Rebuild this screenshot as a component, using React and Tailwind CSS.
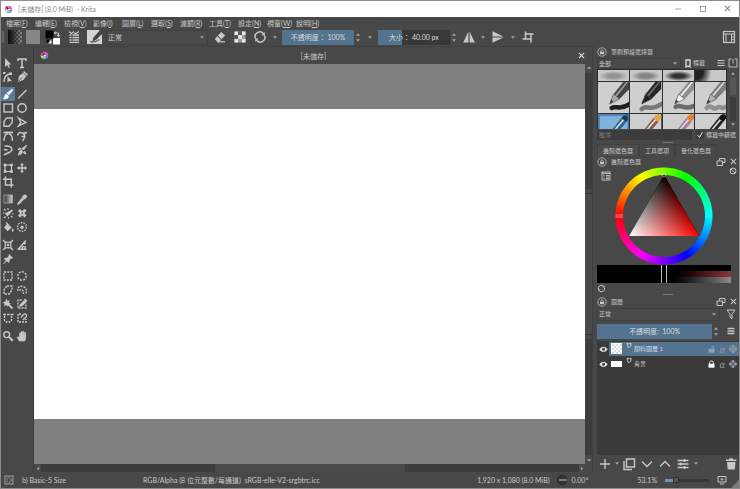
import { useState } from 'react';

const MENUS = [
  ['檔案', 'F'],
  ['編輯', 'E'],
  ['檢視', 'V'],
  ['影像', 'I'],
  ['圖層', 'L'],
  ['選取', 'S'],
  ['濾鏡', 'R'],
  ['工具', 'T'],
  ['設定', 'N'],
  ['視窗', 'W'],
  ['說明', 'H'],
];

const Svg = ({ children, size = 14, className = '' }) => (
  <svg
    viewBox={`0 0 ${size} ${size}`}
    width={size}
    height={size}
    fill="none"
    stroke="currentColor"
    strokeWidth="1.2"
    className={`shrink-0 ${className}`}
    aria-hidden="true"
  >
    {children}
  </svg>
);

const Arrow = ({ up = false }) => (
  <svg viewBox="0 0 4 3" width="4" height="3" className={`shrink-0 ${up ? 'rotate-180' : ''}`} aria-hidden="true">
    <path d="M0 .3h4L2 2.7z" fill="#a4a4a4" />
  </svg>
);

const KritaLogo = () => (
  <svg viewBox="0 0 10 10" width="9" height="9" className="shrink-0" aria-hidden="true">
    <path d="M5 5V.8A4.2 4.2 0 0 1 9.2 5z" fill="#e05ad8" />
    <path d="M5 5h4.2A4.2 4.2 0 0 1 7 8.7z" fill="#6f86f0" />
    <path d="M5 5l2 3.7A4.2 4.2 0 0 1 2.6 8.4z" fill="#35d3e0" />
    <path d="M5 5L2.6 8.4A4.2 4.2 0 0 1 .8 5z" fill="#f4e04a" />
    <path d="M5 5H.8A4.2 4.2 0 0 1 5 .8z" fill="#ee4fb4" />
    <path d="M1.6 1.2l3 2.2 1.8 1.3.2 1.9-1.9-.5-1.2-1.8z" fill="#2b2040" />
    <circle cx="5.4" cy="5.3" r="1.2" fill="#fff" />
  </svg>
);

const TOOLS = [
  [
    ['選取形狀', <path d="M4 2v9l2.2-2 1.5 3 1.3-.6L7.600 8.500H10.400z" fill="currentColor" stroke="none" />],
    ['文字', <path d="M3 5V3h8v2M7 3v8.500M5 11.400h4" strokeWidth="1.500" />],
  ],
  [
    ['編輯形狀', <><path d="M3 12c0-5 2-7.500 6-8" strokeWidth="1.400" /><path d="M2 4h2.500v-2H2zM8 2.500h3v2.500H8z" fill="currentColor" stroke="none" /><path d="M6.500 6v6.500l1.700-1.500 2.800.2z" fill="currentColor" stroke="none" /></>],
    ['書法', <><path d="M3 12l1-6 4-3 3.300 3-3 4z" fill="currentColor" stroke="none" /><path d="M8.500 1.600l4 3.600" strokeWidth="1.600" /><path d="M3.500 11.500L7 7.500" stroke="#484848" strokeWidth=".8" /></>],
  ],
  [
    ['筆刷', <><path d="M11.500 2.500L8 7 7 6.200z" fill="currentColor" strokeWidth="1.800" /><path d="M5.400 7l2.400 2c-.3 3-3 3.600-6 2.900 1.800-.8 1-4.400 3.600-4.900z" fill="currentColor" stroke="none" /></>],
    ['直線', <path d="M3 11.500L11.500 3" strokeWidth="1.400" />],
  ],
  [
    ['矩形', <rect x="3" y="3" width="8.500" height="8" strokeWidth="1.400" />],
    ['橢圓', <circle cx="7" cy="7" r="4.200" strokeWidth="1.400" />],
  ],
  [
    ['多邊形', <path d="M5.500 3h5.700v4.500L8 11.200H3V6.500z" strokeWidth="1.400" />],
    ['折線', <path d="M3.500 3l7.500 4.500-7.500 3.500L6 7.500z" strokeWidth="1.400" />],
  ],
  [
    ['貝茲曲線', <><path d="M3 12c0-4 1.500-7 4-7.500M11.500 12c0-4-1.500-7-4-7.500" strokeWidth="1.300" /><path d="M2.500 3.500h9.500" strokeWidth="1.800" /></>],
    ['手繪路徑', <><path d="M2.500 6.500C4 2.500 5.500 3.500 7 4s3 0 5-.5" strokeWidth="1.500" /><path d="M8 4.500c3 1.500 2 4-.5 7.500M6.500 7.500h3" strokeWidth="1.400" /></>],
  ],
  [
    ['動態筆刷', <path d="M3.500 3c4.500-.5 7.500 1 7.500 3.500S7 9.500 3 12M3 6.500l3.500.5" strokeWidth="1.500" />],
    ['多路筆刷', <path d="M12 2L8.500 7l-1.500-1.500zM9.500 8l1.500 3-2.500-1zM6.200 6L3 6.800l1.500-2zM7.500 8c-.2 2.500-2 4-4.500 4 1.500-1.500 1-4 3-5z" fill="currentColor" strokeWidth=".9" />],
  ],
  [
    ['變形', <><rect x="4" y="4" width="6.500" height="6.500" /><path d="M3 3h2v2H3zM9.500 3h2v2h-2zM3 9.500h2v2H3zM9.500 9.500h2v2h-2z" fill="currentColor" strokeWidth=".7" /></>],
    ['移動', <><path d="M7 3v8M3 7h8" strokeWidth="1.400" /><path d="M7 1.800L9 4.200H5zM7 12.200L5 9.800h4zM1.800 7l2.400-2v4zM12.200 7L9.800 9V5z" fill="currentColor" stroke="none" /></>],
  ],
  [['裁切', <path d="M4.500 1.500v8.500h8M2 4.200h8.300v8.300" strokeWidth="1.500" />]],
  [
    ['漸層', <rect x="3" y="3" width="8.500" height="8" fill="url(#tool-grad)" strokeWidth=".8" stroke="#aaa" />],
    ['顏色取樣', <><path d="M8 5.500L3.500 10.500l-.5 1.500 1.500-.5L9 6.500" /><path d="M7 4.500l3 3 .8-1 1.500-2.200-2.200-2.100L8 3.600z" fill="currentColor" stroke="none" /></>],
  ],
  [
    ['上色遮罩', <><path d="M11.500 4L6.500 9.500l-1.700-1.800z" fill="currentColor" /><path d="M3 3l1.500 1.500M7 2v2M2 7h1.500M3 12l1.500-1.500M10 10l1.500 1.500M7.500 11v1.500M11 8h1.500" /></>],
    ['智慧型修補', <><path d="M4 4l6.500 6.500M10.500 3.800L4 10.500" strokeWidth="3" /><path d="M6.200 7.200h2M7.200 6.200v2" stroke="#484848" strokeWidth=".7" /></>],
  ],
  [
    ['填充', <><path d="M6.500 3.500l4.200 4-4 3.800L3 7.600z" fill="currentColor" stroke="none" /><path d="M5 2.500l2.500 3" /><path d="M11.800 8.500c1.400 2.400.2 3-.2 3s-1.300-.8.200-3z" fill="currentColor" strokeWidth=".5" /></>],
    ['圈選填充', <><circle cx="7" cy="7" r="4.400" strokeDasharray="1.600 1.100" strokeWidth="1.400" /><path d="M5 7.500l2-2.200 2.200 2L7 9.500z" fill="currentColor" stroke="none" /></>],
  ],
  [
    ['輔助工具', <><rect x="4.200" y="4.200" width="5.600" height="5.600" /><path d="M2 2l2.500 2.500M12 2L9.500 4.500M2 12l2.500-2.500M12 12L9.500 9.500M7 5.500v3M5.500 7h3" /></>],
    ['測量', <path d="M2.500 11.200h9M3.500 11L10 3.500v3M9 8.500c-1.500 0-2 1-1.500 2.500M10 8v3" strokeWidth="1.400" />],
  ],
  [['參考圖像', <path d="M8 2.300l3.700 3.500-1 .6-.8-.1-1.600 1.900.1 1.900-.9.500-1.900-1.700L2.500 12l2.300-3.500-1.600-1.900.8-.6 1.900.1L7.900 4z" fill="currentColor" strokeWidth=".5" />]],
  [
    ['矩形選取', <rect x="3" y="3" width="8" height="8" strokeDasharray="2 1.200" strokeWidth="1.400" />],
    ['橢圓選取', <circle cx="7" cy="7" r="4.200" strokeDasharray="2 1.200" strokeWidth="1.400" />],
  ],
  [
    ['多邊形選取', <path d="M6 3h5v4l-3 4H3V6.500z" strokeDasharray="2.200 1" strokeWidth="1.400" />],
    ['手繪選取', <path d="M3 8C2 4 5 2.500 8 3.500s4 3 3 7.500M4.500 7.500c2-2.500 4-.5 4 3.500" strokeDasharray="2 1" strokeWidth="1.400" />],
  ],
  [
    ['連續區域選取', <><path d="M6 6l5.500 5.500" strokeWidth="1.800" /><path d="M5.500 1.500l.9 2.500 2.600-.8L7.700 5.500 10 7l-2.600.4L7 10 5.300 8 3 9.500l.5-2.700L1.500 5.500 4 4.700z" fill="currentColor" stroke="none" /></>],
    ['相似色彩選取', <><path d="M11 7.500V11H3V3h4.500" strokeDasharray="2 1" strokeWidth="1.300" /><path d="M5 9l.5-1.500L9 4l1.500 1.500-3.800 3.200z" fill="currentColor" /><path d="M9.500 2.300l2.300 2.300" strokeWidth="2" /></>],
  ],
  [
    ['貝茲曲線選取', <><path d="M3.500 5v4c0 3 7 3 7 0V5" strokeDasharray="2 1" strokeWidth="1.400" /><path d="M2 3.500h3M6 3.500h2.500M9.500 3.500h3" strokeWidth="1.600" /></>],
    ['磁性選取', <><path d="M6 3H3v8h8V8" strokeDasharray="2 1" strokeWidth="1.400" /><path d="M6 6.500L8.500 3.500c2-1.500 4 .5 2.500 2.500L8 9" strokeWidth="1.300" /></>],
  ],
  [
    ['縮放', <><circle cx="5.700" cy="5.700" r="2.900" strokeWidth="1.400" /><path d="M8 8l3.700 3.700" strokeWidth="2" /></>],
    ['平移', <path d="M4.300 12L2.200 8.300l1-.6L4.500 9V4.200h1V7h.5V2.800h1.200V7h.5V2.600h1.200V7h.5V3.600h1.200v5.600L9.700 12z" fill="currentColor" strokeWidth=".7" />],
  ],
];

// spacing below the rows that close a tool group
const GROUP_GAPS = {
  1: 'mb-[3px]',
  6: 'mb-1',
  8: 'mb-[3px]',
  11: 'mb-1',
  13: 'mb-[3px]',
  17: 'mb-1',
};

const ToolBox = () => (
  <aside className="w-[33px] shrink-0 border-r border-[#3a3a3a] pt-[10px]" aria-label="工具箱">
    <svg width="0" height="0" className="absolute" aria-hidden="true">
      <linearGradient id="tool-grad">
        <stop offset="0" stopColor="#333" />
        <stop offset="1" stopColor="#ccc" />
      </linearGradient>
    </svg>
    {TOOLS.map((row, i) => (
      <div key={row[0][0]} className={`flex ${GROUP_GAPS[i] ?? ''}`}>
        {row.map(([name, shape]) => (
          <button
            key={name}
            type="button"
            title={name}
            aria-label={name}
            className={`size-[14px] ${name === '筆刷' ? 'bg-[#5a7a9c] text-white' : ''}`}
          >
            <Svg>{shape}</Svg>
          </button>
        ))}
      </div>
    ))}
  </aside>
);

const ValueSlider = ({ label, suffix, value, max, className = '' }) => {
  const [current, setCurrent] = useState(value);
  return (
    <div className={`flex ${className}`}>
      <label className="relative flex flex-1 items-center justify-center overflow-hidden bg-[#383838] text-[#dcdcdc]">
        <span className="absolute inset-y-0 left-0 bg-[#53738f]" style={{ width: `${(current / max) * 100}%` }} />
        <span className="relative whitespace-pre">
          {label}
          {suffix(current)}
        </span>
        <input
          type="range"
          min="0"
          max={max}
          value={current}
          onChange={(e) => setCurrent(Number(e.target.value))}
          className="absolute inset-0 size-full appearance-none opacity-0"
        />
      </label>
      <span className="flex w-2 flex-col items-center justify-between py-[3px]">
        <Arrow up />
        <Arrow />
      </span>
    </div>
  );
};

const Combo = ({ label, value, className = '' }) => (
  <div className={`relative flex items-center border border-[#404040] bg-[#4a4a4a] ${className}`}>
    <select aria-label={label} defaultValue={value} className="size-full appearance-none bg-transparent pl-px outline-none">
      <option>{value}</option>
    </select>
    <span className="pointer-events-none absolute right-[3px]">
      <Arrow />
    </span>
  </div>
);

const IconButton = ({ label, className = 'w-4', children }) => (
  <button type="button" aria-label={label} className={`flex h-4 shrink-0 items-center justify-center ${className}`}>
    {children}
  </button>
);

const Reload = () => (
  <>
    <path d="M2.500 8.500a4.700 4.700 0 0 1 8-4.800M11.500 5.500a4.700 4.700 0 0 1-8 4.800" strokeWidth="1.500" />
    <path d="M11.800 2v3.600H8.500zM2.200 12V8.500h3.300z" fill="currentColor" stroke="none" />
  </>
);

const TopBar = () => (
  <div className="flex h-[18px] shrink-0 items-center gap-1 pr-1 pl-px">
    <span className="h-3 w-0.5 shrink-0 border-x border-[#666]" />
    <button type="button" aria-label="漸層" className="shrink-0">
      <svg width="14" height="14" viewBox="0 0 14 14" aria-hidden="true">
        <defs>
          <pattern id="check" width="4" height="4" patternUnits="userSpaceOnUse">
            <rect width="4" height="4" fill="#8d8d8d" />
            <path d="M0 0h2v2H0zM2 2h2v2H2z" fill="#555" />
          </pattern>
          <linearGradient id="fade">
            <stop offset="0.1" stopColor="#111" />
            <stop offset="1" stopColor="#111" stopOpacity="0" />
          </linearGradient>
        </defs>
        <rect width="14" height="14" fill="url(#check)" />
        <rect width="14" height="14" fill="url(#fade)" />
      </svg>
    </button>
    <button type="button" aria-label="圖樣" className="size-[14px] shrink-0 bg-[#858585]" />
    <IconButton label="前景色與背景色" className="w-[18px]">
      <svg width="16" height="15" viewBox="0 0 16 15" aria-hidden="true">
        <path d="M8 8h7v6.500H8z" fill="#fff" />
        <path d="M.5.500h8v8h-8z" fill="#000" stroke="#333" strokeWidth=".5" />
        <path d="M3.500 10.500h3v3h-3z" fill="#fff" />
        <path d="M1.500 9.500h3v3h-3z" fill="#000" />
        <path d="M10 3h3.500v3" fill="none" stroke="#ccc" />
        <path d="M10.500 1v4L8.800 3zM11.500 5h4l-2 2z" fill="#ccc" />
      </svg>
    </IconButton>
    <IconButton label="編輯筆刷設定">
      <Svg>
        <path d="M5.500 5h6.500M5.500 7.500h6.500M5.500 10h6.500M2.500 12.300h9.500M2.500 10h2M2.500 7.500h2M2.500 5h2" strokeWidth="1.300" />
        <path d="M2 1.500l2.500 2L7 1.500M7 3l2 .5 3-2" strokeWidth="1.200" />
      </Svg>
    </IconButton>
    <IconButton label="選擇筆刷預設">
      <svg width="15" height="14" viewBox="0 0 15 14" aria-hidden="true">
        <path d="M0 0h15v14H0z" fill="#d4d4d4" />
        <path d="M15 0v4L9.500 9.500l-4 2 1-4L13 0z" fill="#444" />
        <path d="M3.500 11.500c3 1.500 6 0 9-2" fill="none" stroke="#666" strokeWidth="1.500" />
      </svg>
    </IconButton>
    <Combo label="混合模式" value="正常" className="h-[15px] w-[102px] shrink-0" />
    <IconButton label="橡皮擦模式">
      <Svg>
        <path d="M8.300 2l3.800 3.500-3.600 3.800-3.800-3.600z" fill="currentColor" stroke="none" />
        <path d="M4.200 6.300L8 9.900l-1.300 1.500H4L1.800 9z" fill="currentColor" stroke="none" />
        <path d="M4 11.800h8" />
      </Svg>
    </IconButton>
    <IconButton label="保留透明度">
      <Svg>
        <path d="M1.500 1.500h11v11h-11z" fill="#9a9a9a" stroke="none" />
        <path d="M1.500 1.500h3.600v3.600H1.500zM8.900 1.500h3.600v3.600H8.900zM5.100 5.100h3.800v3.800H5.100zM1.500 8.900h3.600v3.600H1.500zM8.900 8.900h3.600v3.600H8.900z" fill="#e6e6e6" stroke="none" />
        <path d="M5.100 1.500h3.800v3.600H5.100zM1.500 5.100h3.600v3.800H1.500z" fill="#555" stroke="none" />
      </Svg>
    </IconButton>
    <IconButton label="重新載入原始預設">
      <Svg><Reload /></Svg>
    </IconButton>
    <IconButton label="更多" className="w-1.5"><Arrow /></IconButton>
    <ValueSlider label="不透明度： " suffix={(v) => `${v}%`} value={100} max={100} className="h-[15px] w-20 shrink-0" />
    <IconButton label="更多" className="w-2"><Arrow /></IconButton>
    <ValueSlider label="大小： " suffix={(v) => `${v.toFixed(2)} px`} value={40} max={120} className="h-[15px] w-20 shrink-0" />
    <IconButton label="水平鏡像" className="w-[14px]">
      <Svg>
        <path d="M6.400 1.500v11H1.200zM7.600 1.500v11h5.200z" fill="currentColor" stroke="none" />
      </Svg>
    </IconButton>
    <IconButton label="更多" className="w-1.5"><Arrow /></IconButton>
    <IconButton label="垂直鏡像">
      <Svg>
        <path d="M1.500 6.400h11L1.500 1.200zM1.500 7.600h11l-11 5.200z" fill="currentColor" stroke="none" />
      </Svg>
    </IconButton>
    <IconButton label="更多" className="w-1.5"><Arrow /></IconButton>
    <IconButton label="環繞模式">
      <Svg>
        <path d="M4.500 1.500V9M1.500 9h8.500M4.500 4h8M10 4v8.500" strokeWidth="1.500" />
      </Svg>
    </IconButton>
    <IconButton label="選擇工作環境" className="ml-auto w-3">
      <Svg>
        <rect x="1.500" y="1.500" width="11" height="11" />
        <path d="M1.500 4h11M4 4v8.500M9.500 4v8.500M9.500 7h3M9.500 9.700h3" strokeWidth="1" />
      </Svg>
    </IconButton>
  </div>
);

const CloseIcon = () => (
  <svg viewBox="0 0 8 8" width="7" height="7" className="shrink-0" aria-hidden="true">
    <path d="M1 1l6 6M7 1L1 7" stroke="currentColor" strokeWidth="1.200" />
  </svg>
);

const CanvasArea = () => (
  <main className="flex min-w-0 flex-1 flex-col">
    <div className="flex h-[18px] shrink-0 items-center border-t border-[#414141] px-[6px]">
      <KritaLogo />
      <span className="flex-1 text-center">[未儲存]</span>
      <button type="button" aria-label="關閉文件" className="mr-px text-[#e4e4e4]"><CloseIcon /></button>
    </div>
    <div className="flex min-h-0 flex-1">
      <div className="flex flex-1 flex-col bg-[#808080] py-[45px]">
        <div className="flex-1 bg-white" />
      </div>
      <div className="flex w-[7px] flex-col items-center gap-1 py-0.5">
        <Arrow up />
        <div className="w-full flex-1 bg-[#3d3d3d]" />
        <div className="w-full flex-[1.200] border-y border-[#383838] bg-[#4a4a4a]" />
        <div className="w-full flex-1 bg-[#3d3d3d]" />
        <Arrow />
      </div>
    </div>
    <div className="flex h-2 items-center pr-[7px] pl-px">
      <span className="flex w-[6px] rotate-90 justify-center"><Arrow /></span>
      <div className="h-full flex-1 bg-[#3d3d3d]" />
      <div className="h-full flex-[1.100] bg-[#4a4a4a]" />
      <div className="h-full flex-1 bg-[#3d3d3d]" />
      <span className="flex w-[6px] -rotate-90 justify-center"><Arrow /></span>
    </div>
  </main>
);

const DockHeader = ({ title, controls = true }) => (
  <div className="flex h-[11px] items-center gap-1 pr-0.5 text-[6px]">
    <Svg size={10}>
      <circle cx="5" cy="5" r="4.200" strokeWidth=".8" />
      <path d="M3 4.800h4v2.400H3z" fill="currentColor" stroke="none" />
      <path d="M3.600 4.800c0-2.400 2.800-2.400 2.800 0" strokeWidth=".8" />
    </Svg>
    <h2 className="flex-1">{title}</h2>
    {controls && (
      <>
        <button type="button" aria-label="浮動面板">
          <Svg size={10}>
            <path d="M3.500 3.500V1.500h5.500v4H7M1 4h5.500v4.500H1z" strokeWidth="1" />
          </Svg>
        </button>
        <button type="button" aria-label="關閉面板"><CloseIcon /></button>
      </>
    )}
  </div>
);

const SMUDGES = [
  ['#7c7c7c', 0.7],
  ['#6c6c6c', 0.75],
  ['#333', 1],
  ['#222', 1],
];

const SmudgePreset = ({ color, opacity, edge }) => (
  <svg viewBox="0 0 32 11" preserveAspectRatio="none" className="h-[11px] w-full bg-[#c8c8c8]" aria-hidden="true">
    <defs>
      <radialGradient id={`smudge-${color.slice(1)}`}>
        <stop offset="0.4" stopColor={color} stopOpacity={opacity} />
        <stop offset="1" stopColor={color} stopOpacity="0" />
      </radialGradient>
    </defs>
    <ellipse cx={edge ? 2 : 16} cy={edge ? 2 : 6} rx="15" ry={edge ? 17 : 5} fill={`url(#smudge-${color.slice(1)})`} />
  </svg>
);

const PENS = [
  { barrel: '#444', shine: '#9b9b9b', tip: '#a9a9a9', stroke: '#1f1f1f', line: 'M14 26c4-3 10 3 18-4' },
  { barrel: '#262626', shine: '#6b6b6b', tip: '#222', stroke: '#777', line: 'M12 27c6-5 8 3 20-5' },
  { barrel: '#8f8f8f', shine: '#ececec', tip: '#efefef', stroke: '#6b6b6b', line: 'M13 25c4-4 10 4 18-1' },
  { barrel: '#7d7d7d', shine: '#d6d6d6', tip: '#b4b4b4', stroke: '#8f8f8f', line: 'M12 26c4-5 6 3 10 0s6 2 9-1' },
];

const PenPreset = ({ pen }) => (
  <svg viewBox="0 0 32 31" preserveAspectRatio="none" className="h-[31px] w-full bg-[#cfcfcf]" aria-hidden="true">
    <path d={pen.line} fill="none" stroke={pen.stroke} strokeWidth="4.500" strokeLinecap="round" />
    <path d="M26 0h6v7L22 17l-6-5z" fill={pen.barrel} />
    <path d="M29 0h2L19 14.500l-1.500-1.200z" fill={pen.shine} />
    <path d="M16 12l6 5-10 5z" fill={pen.tip} stroke="#444" strokeWidth=".6" />
    <path d="M13.500 17.500l2 2-3.500 2.500z" fill="#333" />
  </svg>
);

const PENCILS = [
  { bg: '#80b2dc', body: '#2f5f93', cap: '#1c3550' },
  { bg: '#cfcfcf', body: '#8b5a4a', cap: '#e0a73a' },
  { bg: '#cfcfcf', body: '#a77b94', cap: '#e0842c' },
  { bg: '#cfcfcf', body: '#222', cap: '#111' },
];

const PencilPreset = ({ pencil, selected }) => (
  <svg viewBox="0 0 32 15" preserveAspectRatio="none" className="h-[15px] w-full" aria-hidden="true">
    <rect width="32" height="15" fill={pencil.bg} />
    <path d="M24 4l5 4-6 7h-8z" fill={pencil.body} />
    <path d="M25.500 5l1.500 1-8 9h-2z" fill="#ddd" />
    <path d="M26 1.500L29 0l3 1v3l-3 4-5-4z" fill={pencil.cap} />
    {selected && <path d="M1 15V1h30v14" fill="none" stroke="#3b78ad" strokeWidth="1.500" />}
  </svg>
);

const BrushPresets = () => (
  <section className="flex flex-col">
    <DockHeader title="筆刷預設選擇器" controls={false} />
    <div className="flex h-3 items-center text-[6px]">
      <Combo label="標籤篩選" value="全部" className="h-[11px] w-[84px]" />
      <button type="button" className="flex flex-1 items-center gap-0.5 pl-1">
        <svg viewBox="0 0 6 9" width="6" height="9" aria-hidden="true">
          <path d="M1 1h4v7L3 7 1 8z" fill="none" stroke="#e0e0e0" strokeWidth="1.300" />
        </svg>
        標籤
      </button>
      <IconButton label="顯示設定" className="w-3">
        <Svg size={10}><path d="M1.500 2.500h7M1.500 5h7M1.500 7.500h7" /></Svg>
      </IconButton>
      <IconButton label="儲存設定" className="w-3">
        <Svg size={10}><path d="M3.500 1H1v8h8V1H6.500M5 1v4.500" strokeWidth=".9" /></Svg>
      </IconButton>
    </div>
    <div className="flex bg-[#2f2f2f]">
      <div className="grid flex-1 grid-cols-4 gap-px p-px pb-0">
        {SMUDGES.map(([color, opacity], i) => (
          <SmudgePreset key={color} color={color} opacity={opacity} edge={i === 3} />
        ))}
        {PENS.map((pen) => <PenPreset key={pen.barrel} pen={pen} />)}
        {PENCILS.map((pencil, i) => <PencilPreset key={pencil.body} pencil={pencil} selected={i === 0} />)}
      </div>
      <div className="flex w-3 flex-col items-center gap-0.5 bg-[#484848] py-[3px]">
        <Arrow up />
        <div className="h-[18px] w-1.5 bg-[#565656]" />
        <div className="w-1.5 flex-1 bg-[#3d3d3d]" />
        <Arrow />
      </div>
    </div>
    <div className="flex h-3 items-center gap-1 pr-[3px] text-[6px]">
      <input
        type="search"
        aria-label="搜尋筆刷"
        placeholder="搜尋"
        className="h-[10px] min-w-0 flex-1 bg-[#3c3c3c] px-0.5 outline-none placeholder:text-[#8a8a8a]"
      />
      <label className="relative flex shrink-0 items-center gap-0.5 whitespace-nowrap">
        <input type="checkbox" defaultChecked className="peer size-2 shrink-0 appearance-none bg-[#3c3c3c]" />
        <svg viewBox="0 0 8 8" className="pointer-events-none invisible absolute left-0 size-2 peer-checked:visible" aria-hidden="true">
          <path d="M1.500 4l2 2.500L6.500 1" fill="none" stroke="#e8e8e8" />
        </svg>
        標籤中篩選
      </label>
    </div>
  </section>
);

const Splitter = () => <div className="mx-auto my-px h-px w-[10px] shrink-0 bg-[#7a7a7a]" />;

const arcPoint = (deg, r) => {
  const rad = ((deg + 180) * Math.PI) / 180;
  return `${49 + r * Math.cos(rad)} ${49 + r * Math.sin(rad)}`;
};

const HUES = Array.from({ length: 120 }, (_, i) => i * 3);

const ColorWheel = () => (
  <svg viewBox="0 0 98 98" width="98" height="98" className="shrink-0" role="img" aria-label="色相環">
    <defs>
      <linearGradient id="to-red" gradientUnits="userSpaceOnUse" x1="31.500" y1="38" x2="84" y2="69">
        <stop offset="0" stopColor="#000" />
        <stop offset="1" stopColor="#f00" />
      </linearGradient>
      <linearGradient id="to-white" gradientUnits="userSpaceOnUse" x1="66.500" y1="38" x2="14" y2="69">
        <stop offset="0" stopColor="#000" />
        <stop offset="1" stopColor="#fff" />
      </linearGradient>
    </defs>
    {HUES.map((hue) => (
      <path
        key={hue}
        d={`M${arcPoint(hue - 1.6, 48.5)}A48.5 48.5 0 0 1 ${arcPoint(hue + 2, 48.5)}L${arcPoint(hue + 2, 41)}A41 41 0 0 0 ${arcPoint(hue - 1.6, 41)}z`}
        fill={`hsl(${hue} 100% 50%)`}
      />
    ))}
    <g className="isolate">
      <path d="M49 8L84 69H14z" fill="url(#to-red)" />
      <path d="M49 8L84 69H14z" fill="url(#to-white)" className="mix-blend-plus-lighter" />
    </g>
    <path d="M.5 48h7.500M.5 50h7.500" stroke="#f4b0b0" strokeWidth=".8" />
    <circle cx="49" cy="8.500" r="1.500" fill="none" stroke="#ccc" strokeWidth=".6" />
  </svg>
);

const DOCK_TABS = ['進階選色器', '工具選項', '量化選色器'];

const ColorSelector = () => (
  <section className="flex flex-col">
    <div role="tablist" className="flex h-3 text-[6px]">
      {DOCK_TABS.map((tab, i) => (
        <button
          key={tab}
          type="button"
          role="tab"
          aria-selected={i === 0}
          className={`border border-b-0 border-[#404040] px-[5px] ${i === 0 ? 'bg-[#4d4d4d]' : ''}`}
        >
          {tab}
        </button>
      ))}
    </div>
    <DockHeader title="進階選色器" />
    <div className="flex items-start">
      <button type="button" aria-label="選色器設定" className="w-[18px] pt-1 pl-1">
        <Svg size={10}>
          <rect x="1" y="1" width="8" height="8" strokeWidth=".9" />
          <path d="M1 2.500h8M2.500 4.500h1M2.500 6h1M2.500 7.500h1M5 4.500h3M5 6h3M5 7.500h3" strokeWidth=".9" />
        </Svg>
      </button>
      <ColorWheel />
      <button type="button" aria-label="清除色彩" className="ml-auto pr-0.5">
        <Svg size={8}>
          <circle cx="4" cy="4" r="3" strokeWidth="1" />
          <path d="M2 2l4 4" strokeWidth="1" />
        </Svg>
      </button>
    </div>
    <div className="relative mr-2 flex flex-col">
      <div className="h-[6px] bg-black" />
      <div className="h-[6px] bg-linear-to-r from-black from-50% to-[#8e3838]" />
      <div className="h-[6px] bg-linear-to-r from-black from-50% to-[#8a8a8a]" />
      <span className="absolute inset-y-0 left-1/2 w-[6px] -translate-x-1/2 border-x border-[#bdbdbd]" />
    </div>
    <button type="button" aria-label="重新整理色彩記錄" className="flex h-2.5 items-center">
      <svg viewBox="0 0 14 14" width="9" height="9" fill="none" stroke="currentColor" aria-hidden="true"><Reload /></svg>
    </button>
  </section>
);

const Eye = () => (
  <svg viewBox="0 0 10 8" width="9" height="8" aria-hidden="true">
    <path d="M.5 4.500C2.500.5 7.500.5 9.500 4.500 7.500 8 2.500 8 .5 4.500z" fill="#e2e2e2" />
    <circle cx="5" cy="4.300" r="1.600" fill="#333" />
    <circle cx="4.500" cy="3.800" r=".5" fill="#fff" />
  </svg>
);

const LAYERS = [
  { name: '顏料圖層 1', selected: true, locked: false },
  { name: '背景', selected: false, locked: true },
];

const LayerRow = ({ layer }) => (
  <li className="flex h-[15px] items-center">
    <button type="button" aria-label="顯示圖層" className="flex w-3 shrink-0 justify-center"><Eye /></button>
    <div
      className={`flex h-[14px] flex-1 items-center gap-1 px-0.5 text-[6px] ${
        layer.selected ? 'bg-[#53738f] text-[#d8dee4]' : ''
      }`}
    >
      {layer.selected ? (
        <svg viewBox="0 0 11 11" width="11" height="11" className="shrink-0" aria-hidden="true">
          <path d="M0 0h11v11H0z" fill="#fff" />
          <path d="M1 1h2v2H1zM5 1h2v2H5zM9 1h2v2H9zM3 3h2v2H3zM7 3h2v2H7zM1 5h2v2H1zM5 5h2v2H5zM9 5h2v2H9zM3 7h2v2H3zM7 7h2v2H7zM1 9h2v2H1zM5 9h2v2H5zM9 9h2v2H9z" fill="#dedede" />
        </svg>
      ) : (
        <span className="h-[6px] w-[11px] shrink-0 bg-white" />
      )}
      <div className="flex h-full flex-1 gap-0.5">
        <svg viewBox="0 0 6 6" width="6" height="6" className="shrink-0" aria-hidden="true">
          <path d="M1 1l2 1 2-1v3L3.500 5.300H2L1.500 3.500z" fill="none" stroke="#ddd" strokeWidth=".8" />
        </svg>
        <span className="self-center">{layer.name}</span>
      </div>
      <button type="button" aria-label="鎖定圖層" className={layer.locked ? 'text-white' : 'text-[#8ba3b9]'}>
        <svg viewBox="0 0 7 8" width="7" height="8" aria-hidden="true">
          <path d="M.5 3.800h6v3.900h-6z" fill="currentColor" />
          <path d={layer.locked ? 'M1.700 4V2.500c0-2 3.600-2 3.600 0V4' : 'M5.300 4V1.500h-2'} fill="none" stroke="currentColor" />
        </svg>
      </button>
      <span className="text-[10px] leading-none text-[#8f9ba6] italic">α</span>
      <svg viewBox="0 0 8 8" width="8" height="8" className="shrink-0 text-[#8f9ba6]" aria-hidden="true">
        <circle cx="4" cy="4" r="3.600" fill="currentColor" opacity=".5" />
        <path d="M3 0h2v2.500H3zM3 5.500h2V8H3zM0 3h2.500v2H0zM5.500 3H8v2H5.500z" fill="currentColor" />
      </svg>
    </div>
  </li>
);

const LayersDock = () => (
  <section className="flex min-h-0 flex-1 flex-col">
    <DockHeader title="圖層" />
    <div className="flex h-[14px] shrink-0 items-center justify-between text-[6px]">
      <Combo label="圖層混合模式" value="正常" className="h-[13px] w-[123px]" />
      <IconButton label="篩選圖層">
        <Svg size={12}><path d="M2 2h8L7 6v5L5 9V6z" strokeWidth="1" /></Svg>
      </IconButton>
    </div>
    <div className="flex h-5 shrink-0 items-center justify-between">
      <ValueSlider label="不透明度:  " suffix={(v) => `${v}%`} value={100} max={100} className="h-[15px] w-[123px]" />
      <IconButton label="圖層選項">
        <Svg size={10}><path d="M1.500 2.500h7M1.500 5h7M1.500 7.500h7" strokeWidth="1.300" /></Svg>
      </IconButton>
    </div>
    <ul className="flex-1 bg-[#3a3a3a]">
      {LAYERS.map((layer) => <LayerRow key={layer.name} layer={layer} />)}
    </ul>
    <div className="flex h-[17px] shrink-0 items-center gap-0.5">
      <IconButton label="新增圖層">
        <Svg><path d="M7 2v10M2 7h10" strokeWidth="1.300" /></Svg>
      </IconButton>
      <IconButton label="圖層類型" className="w-1"><Arrow /></IconButton>
      <IconButton label="複製圖層">
        <Svg><path d="M4.500 2h8v8h-8zM2 4v8.500h8" strokeWidth="1.400" /></Svg>
      </IconButton>
      <IconButton label="下移圖層">
        <Svg><path d="M2 4.500l5 5 5-5" strokeWidth="1.400" /></Svg>
      </IconButton>
      <IconButton label="上移圖層">
        <Svg><path d="M2 9.500l5-5 5 5" strokeWidth="1.400" /></Svg>
      </IconButton>
      <IconButton label="圖層屬性">
        <Svg>
          <path d="M1.500 3.500h11M1.500 7h11M1.500 10.500h11" strokeWidth="1.300" />
          <path d="M8.500 2v3M4.500 5.500v3M8.500 9v3" strokeWidth="1.600" />
        </Svg>
      </IconButton>
      <IconButton label="更多" className="w-1.5"><Arrow /></IconButton>
      <IconButton label="刪除圖層" className="mr-0.5 ml-auto w-3">
        <Svg>
          <path d="M3 5h8.500l-.7 7.500H3.700zM2 2.500h10.500V4H2zM5.500 1.300h3.500V3H5.500z" fill="currentColor" stroke="none" />
        </Svg>
      </IconButton>
    </div>
  </section>
);

const StatusBar = () => (
  <footer className="flex h-4 shrink-0 items-center pl-[3px]">
    <Svg size={10}>
      <rect x="1" y="1" width="8" height="8" strokeWidth=".7" />
      <circle cx="5" cy="5" r="2.300" strokeWidth=".8" strokeDasharray="1.200 .8" />
    </Svg>
    <span className="w-[122px] pl-2">b) Basic-5 Size</span>
    <span className="flex-1 pl-[7px] whitespace-pre">RGB/Alpha (8 位元整數/每通道)  sRGB-elle-V2-srgbtrc.icc</span>
    <span>1,920 x 1,080 (8.0 MiB)</span>
    <span className="flex w-[88px] items-center gap-1 pl-[6px]">
      <Svg size={12}>
        <circle cx="6" cy="6" r="5.500" fill="#333" stroke="none" />
        <path d="M3 6h8" strokeWidth="1" />
      </Svg>
      0.00°
    </span>
    <label htmlFor="zoom">53.1%</label>
    <input
      id="zoom"
      type="range"
      defaultValue="22"
      className="mx-2 h-[3px] w-11 appearance-none bg-linear-to-r from-[#6d92c4] from-20% to-[#363636] to-20% [&::-webkit-slider-thumb]:size-[6px] [&::-webkit-slider-thumb]:appearance-none [&::-webkit-slider-thumb]:border [&::-webkit-slider-thumb]:border-[#333] [&::-webkit-slider-thumb]:bg-[#555]"
    />
    <Svg size={10}>
      <path d="M1 1.500h8v5.500H1zM3 9h4" strokeWidth="1" />
      <path d="M3.500 4.300h3M5 3v2.600" strokeWidth=".8" />
    </Svg>
    <svg viewBox="0 0 8 8" width="8" height="8" className="ml-1 shrink-0 self-end" aria-hidden="true">
      <path d="M8 0v8H0z" fill="#7a7a7a" />
    </svg>
  </footer>
);

const App = () => (
  <div className="flex h-screen min-h-[480px] flex-col overflow-hidden border border-[#8c8c8c] bg-[#484848] font-['Lato','Noto_Sans_CJK_TC',sans-serif] text-[7px] leading-[10px] text-[#c8c8c8]">
    <header className="flex h-4 shrink-0 items-center gap-[5px] bg-white pl-[3px] text-[#8a8a8a]">
      <KritaLogo />
      <h1 className="flex-1 whitespace-pre">[未儲存] (8.0 MiB)  - Krita</h1>
      <button type="button" aria-label="最小化" className="flex w-4 justify-center">
        <Svg size={8}><path d="M1 4h6" strokeWidth=".8" /></Svg>
      </button>
      <div className="flex">
        <button type="button" aria-label="最大化" className="flex w-6 justify-center">
          <Svg size={8}><rect x="1.500" y="1.500" width="5" height="5" strokeWidth=".8" /></Svg>
        </button>
        <button type="button" aria-label="關閉" className="flex w-6 justify-center"><CloseIcon /></button>
      </div>
    </header>
    <nav className="flex h-[11px] shrink-0 items-center gap-[7px] pl-[5px]">
      {MENUS.map(([name, key]) => (
        <button key={key} type="button" className="w-[22px] text-left whitespace-nowrap">
          {name}(<u>{key}</u>)
        </button>
      ))}
    </nav>
    <TopBar />
    <div className="flex min-h-0 flex-1">
      <ToolBox />
      <CanvasArea />
      <aside className="flex w-[147px] shrink-0 flex-col border-l border-[#3e3e3e] pl-1">
        <BrushPresets />
        <Splitter />
        <ColorSelector />
        <Splitter />
        <LayersDock />
      </aside>
    </div>
    <StatusBar />
  </div>
);

export default App;
